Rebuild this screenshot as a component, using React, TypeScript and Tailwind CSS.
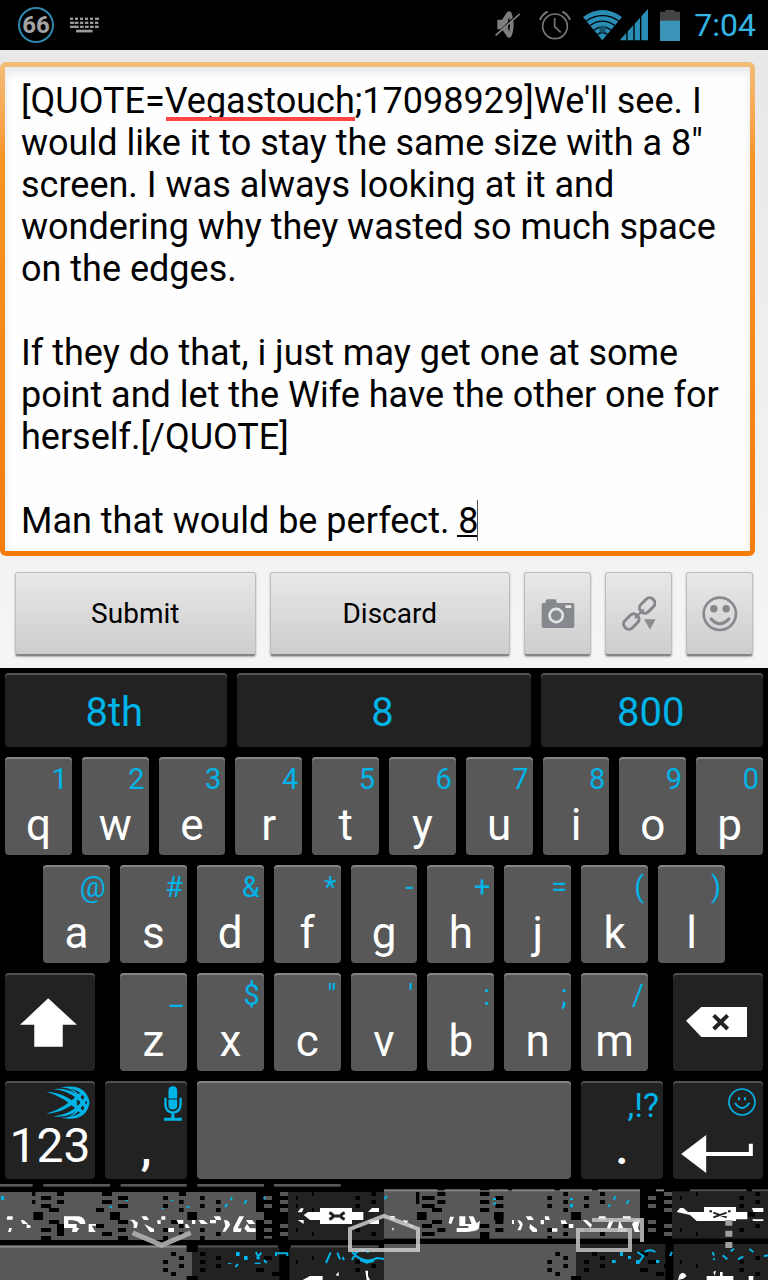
import type { ReactNode } from "react";

const DRAFT = `[QUOTE=Vegastouch;17098929]We'll see. I would like it to stay the same size with a 8" screen. I was always looking at it and wondering why they wasted so much space on the edges.

If they do that, i just may get one at some point and let the Wife have the other one for herself.[/QUOTE]

Man that would be perfect. 8`;

const ROW_1 = [["q", "1"], ["w", "2"], ["e", "3"], ["r", "4"], ["t", "5"], ["y", "6"], ["u", "7"], ["i", "8"], ["o", "9"], ["p", "0"]];
const ROW_2 = [["a", "@"], ["s", "#"], ["d", "&"], ["f", "*"], ["g", "-"], ["h", "+"], ["j", "="], ["k", "("], ["l", ")"]];
const ROW_3 = [["z", "_"], ["x", "$"], ["c", "\""], ["v", "'"], ["b", ":"], ["n", ";"], ["m", "/"]];

type Box = [x: number, y: number, w: number, h: number];

export default function App() {
  return (
    <div className="min-h-screen bg-black font-['Roboto',sans-serif]">
      <StatusBar />
      <Composer />
      <Keyboard />
      <NavBar />
    </div>
  );
}

function StatusBar() {
  return (
    <header className="flex h-[50px] items-center bg-black pl-[18px] pr-3">
      <span className="flex size-9 items-center justify-center rounded-full border-2 border-[#2d86ab] text-2xl font-bold leading-8 text-[#a3a3a3]">
        66
      </span>
      <svg viewBox="209 53 86 46" className="ml-4 h-4 w-[29px]" fill="#9a9a9a" aria-hidden="true">
        {[0, 1, 2, 3, 4, 5].map((i) => (
          <g key={i}>
            <rect x={209 + i * 14.8} y="54" width={i === 5 ? 12 : 9} height="7" />
            <rect x={209 + i * 14.8} y="66" width={i === 0 ? 13 : 10} height="7" />
            <rect x={209 + i * 14.8} y="78" width={i === 0 ? 17 : 11} height="7" />
          </g>
        ))}
        <rect x="227" y="90" width="49" height="8" />
      </svg>

      <div className="ml-auto flex items-center">
        <svg viewBox="45 33 75 90" className="h-[30px] w-[25px]" aria-hidden="true">
          <path d="M52 62 H66 L82 38 Q88 34 94 40 Q101 57 101 76 Q101 98 94 112 Q88 120 82 114 L66 91 H52 Z" fill="#7d7d7d" />
          <path d="M87 54 Q93 76 87 99 Q80 76 87 54Z" fill="#000" />
          <path d="M43 113 L116 42" stroke="#000" strokeWidth="5" />
          <path d="M47 109 L119 45" stroke="#858585" strokeWidth="5" />
        </svg>
        <svg viewBox="177 30 96 90" className="ml-[19px] h-[30px] w-8" fill="none" stroke="#777" strokeWidth="5" aria-hidden="true">
          <circle cx="225" cy="79" r="37" />
          <path d="M224 54 V80 L242 97" />
          <path d="M180 60 Q186 43 203 35 M270 60 Q264 43 247 35" strokeWidth="6" />
        </svg>
        <svg viewBox="309 27 195 96" className="ml-3 h-8 w-[65px]" fill="#2a8db5" aria-hidden="true">
          <path d="M309 51 Q367 9 426 51 L367 121 Z" />
          <g fill="none" stroke="#000" strokeWidth="4">
            <path d="M318 63 Q367 31 417 63" />
            <path d="M331 76 Q367 51 404 76" />
            <path d="M342 90 Q367 71 393 90" />
            <path d="M353 103 Q367 92 382 103" />
          </g>
          <path d="M355 78 H380 L374 98 H361 Z" fill="#17566f" />
          <path d="M419 121 L504 27 V121 Z" />
          <path d="M441 90 V123 M462 60 V123 M482 40 V123" stroke="#000" strokeWidth="4" />
        </svg>
        <svg viewBox="540 27 60 93" className="ml-3 h-[31px] w-5" aria-hidden="true">
          <path d="M540 32 H556 V27 H584 V32 H600 V60 H540Z" fill="#444" />
          <rect x="540" y="59" width="60" height="61" fill="#3b95b9" />
        </svg>
        <time className="ml-[14px] text-[32px] leading-9 text-[#33b5e5]">7:04</time>
      </div>
    </header>
  );
}

function Composer() {
  return (
    <main className="bg-gradient-to-b from-[#e8e8e8] to-[#f5f5f5] pb-3 pt-3">
      <div className="relative mr-[13px] rounded-md bg-gradient-to-b from-[#f1bd78] via-[#fb9422] via-20% to-[#f57c0b] p-[5px]">
        <textarea
          aria-label="Message"
          rows={11}
          defaultValue={DRAFT}
          spellCheck={false}
          className="block w-full resize-none overflow-hidden bg-[#fefefe] pb-[9px] pl-4 pr-2 pt-[13px] text-4xl leading-[42px] text-black shadow-[inset_0_5px_8px_#e6e6e6] outline-none"
        />
        {/* spelling mark, composing underline, caret */}
        <span className="absolute left-[166px] top-[55px] h-1 w-[189px] bg-[#ff4444]" />
        <span className="absolute left-[457px] top-[473px] h-0.5 w-5 bg-black" />
        <span className="absolute left-[477px] top-[438px] h-[41px] w-px bg-[#555]" />
      </div>

      <div className="mt-4 flex gap-[14px] px-[15px]">
        <ActionButton className="flex-1">Submit</ActionButton>
        <ActionButton className="flex-1">Discard</ActionButton>
        <ActionButton className="w-[67px]" label="Take photo">
          <svg viewBox="119 176 101 91" className="h-[30px] w-[34px]" fill="#85888c">
            <path d="M120 192 Q120 188 126 188 H132 V182 Q132 177 138 177 H159 Q165 177 165 183 V188 H213 Q219 188 219 194 V258 Q219 264 213 264 H126 Q120 264 120 258Z" />
            <rect x="192" y="195" width="18" height="8" rx="2" fill="#e8e8e8" />
            <circle cx="164" cy="226" r="20" fill="none" stroke="#e4e4e4" strokeWidth="8" />
          </svg>
        </ActionButton>
        <ActionButton className="w-[67px]" label="Insert link">
          <svg viewBox="361 168 102 104" className="h-[35px] w-[34px]" fill="none" stroke="#84878b" strokeWidth="9">
            <rect x="411" y="181" width="51" height="31" rx="14" transform="rotate(-45 436 196)" />
            <rect x="364" y="229" width="51" height="31" rx="14" transform="rotate(-45 389 245)" />
            <path d="M400 234 L426 208" strokeWidth="7" />
            <path d="M427 237 H462 L445 268Z" fill="#8c8c8c" stroke="none" />
          </svg>
        </ActionButton>
        <ActionButton className="w-[67px]" label="Insert smiley">
          <svg viewBox="602 167 107 107" className="size-9" fill="none" stroke="#85888c" strokeWidth="8">
            <circle cx="655" cy="220" r="48" />
            <path d="M629 235 Q655 264 682 235" strokeWidth="9" strokeLinecap="round" />
            <circle cx="637" cy="205" r="11" fill="#85888c" stroke="none" />
            <circle cx="674" cy="205" r="11" fill="#85888c" stroke="none" />
          </svg>
        </ActionButton>
      </div>
    </main>
  );
}

function ActionButton({ className, label, children }: { className: string; label?: string; children: ReactNode }) {
  return (
    <button
      aria-label={label}
      className={`flex h-[84px] items-center justify-center rounded-[3px] border border-b-2 border-[#bdbdbd] border-b-[#858585] bg-gradient-to-b from-[#e8e8e8] to-[#cdcdcd] text-[28px] text-black shadow-[0_1px_2px_#aaa] ${className}`}
    >
      {children}
    </button>
  );
}

function Keyboard() {
  return (
    <section aria-label="Keyboard" className="flex flex-col gap-2.5 bg-black px-[5px] pt-[5px]">
      <div className="flex gap-2.5">
        <Suggestion className="flex-[3]">8th</Suggestion>
        <Suggestion className="flex-[4]">8</Suggestion>
        <Suggestion className="flex-[3]">800</Suggestion>
      </div>
      <div className="flex gap-2.5">
        {ROW_1.map(([k, h]) => <LetterKey key={k} letter={k} hint={h} />)}
      </div>
      <div className="flex gap-2.5 px-[38px]">
        {ROW_2.map(([k, h]) => <LetterKey key={k} letter={k} hint={h} />)}
      </div>
      <div className="flex gap-[25px]">
        <DarkKey className="w-[90px] items-center justify-center pr-[3px]" label="Shift">
          <svg viewBox="61 97 172 148" className="h-[49px] w-[57px]" fill="#fff">
            <path d="M146 98 L233 178 H190 V244 H104 V178 H61Z" />
          </svg>
        </DarkKey>
        <div className="flex flex-1 gap-2.5">
          {ROW_3.map(([k, h]) => <LetterKey key={k} letter={k} hint={h} />)}
        </div>
        <DarkKey className="w-[90px] items-center justify-center pr-[3px]" label="Delete">
          <svg viewBox="380 126 183 90" className="h-[30px] w-[61px]">
            <path d="M380 167 L426 126 H563 V216 H426Z" fill="#fff" />
            <path d="M463 151 L505 192 M505 151 L463 192" stroke="#222" strokeWidth="12" />
          </svg>
        </DarkKey>
      </div>
      <div className="flex gap-2.5">
        <DarkKey className="w-[90px] items-end" label="Numbers">
          <SwiftLogo />
          <span className="w-full text-center text-[48px] leading-[54px]">123</span>
        </DarkKey>
        <DarkKey className="w-[82px] items-end" label="Comma, voice input">
          <svg viewBox="494 362 53 104" className="mr-[5px] mt-[5px] h-[35px] w-[18px]" fill="none" stroke="#00b4e8" strokeWidth="7">
            <path d="M507 399 V376 Q507 363 520 363 Q533 363 533 376 V399Z M507 402 H533 V419 Q533 432 520 432 Q507 432 507 419Z" fill="#00b4e8" stroke="none" />
            <path d="M498 397 V415 Q498 441 520 441 Q543 441 543 415 V397" />
            <path d="M520 441 V460 M494 461 H547" strokeWidth="9" />
          </svg>
          <span className="w-full text-center text-[48px] font-medium leading-[54px]">,</span>
        </DarkKey>
        <button aria-label="Space" className="h-[98px] flex-1 rounded bg-[#585858] shadow-[inset_0_2px_0_#858585]" />
        <DarkKey className="w-[82px] items-end" label="Period">
          <span className="mr-1 mt-1 h-9 text-[34px] leading-10 text-[#00b4e8]">,!?</span>
          <span className="w-full text-center text-[48px] font-medium leading-[54px]">.</span>
        </DarkKey>
        <DarkKey className="w-[90px] items-end" label="Enter">
          <svg viewBox="504 369 84 84" className="mr-[7px] mt-[7px] size-7" fill="none" stroke="#00b4e8" strokeWidth="5">
            <circle cx="546" cy="411" r="39" />
            <path d="M525 414 Q546 444 568 414 M537 397 V406 M555 397 V406" strokeWidth="6" />
          </svg>
          <svg viewBox="365 509 215 114" className="mr-2.5 mt-[19px] h-[38px] w-[72px]" fill="#fff">
            <path d="M365 566 L440 509 V560 H568 V535 H580 V572 H440 V623Z" />
          </svg>
        </DarkKey>
      </div>
    </section>
  );
}

function SwiftLogo() {
  const streaks = (
    <>
      <path d="M183 366 Q258 350 270 411 L262 411 Q248 366 183 366Z" />
      <path d="M160 370 Q230 362 264 424 L255 428 Q224 376 160 370Z" />
      <path d="M140 378 Q204 380 250 436 L241 441 Q196 394 140 378Z" />
      <path d="M196 364 Q240 374 250 411 L243 411 Q234 378 196 364Z" />
    </>
  );
  return (
    <svg viewBox="139 361 132 99" className="mr-[5px] mt-[5px] h-[33px] w-11" fill="#00b4e8">
      {streaks}
      <g transform="translate(0 822) scale(1 -1)">{streaks}</g>
      <path d="M206 411 L222 399 L234 411 L222 423Z" />
    </svg>
  );
}

function Suggestion({ className, children }: { className: string; children: ReactNode }) {
  return (
    <button className={`h-[74px] rounded bg-[#222] pr-[3px] pt-1.5 text-[40px] leading-[48px] text-[#00b4e8] shadow-[inset_0_2px_0_#555] ${className}`}>
      {children}
    </button>
  );
}

function LetterKey({ letter, hint }: { letter: string; hint: string }) {
  return (
    <button className="flex h-[98px] min-w-0 flex-1 flex-col rounded bg-[#585858] pt-1 shadow-[inset_0_2px_0_#858585]">
      <span className="w-full pr-1 text-right text-[29px] leading-9 text-[#00b4e8]">{hint}</span>
      <span className="w-full text-center text-[44px] leading-[56px] text-white">{letter}</span>
    </button>
  );
}

function DarkKey({ className, label, children }: { className: string; label: string; children: ReactNode }) {
  return (
    <button aria-label={label} className={`flex h-[98px] shrink-0 flex-col rounded bg-[#222] text-white shadow-[inset_0_2px_0_#505050] ${className}`}>
      {children}
    </button>
  );
}

// Leftovers of the key rows under the navigation bar, three units to a pixel
const GREY: Box[] = [
  [0, 12, 98, 8], [130, 12, 200, 8], [362, 12, 198, 8], [592, 12, 200, 8], [822, 12, 200, 8],
  [0, 36, 768, 144], [1152, 30, 768, 146], [0, 200, 576, 100], [1152, 192, 576, 108],
  [792, 48, 24, 12], [840, 36, 24, 12], [792, 72, 24, 12], [840, 60, 24, 12], [768, 96, 24, 24], [840, 84, 24, 12],
  [792, 120, 24, 12], [840, 132, 24, 12], [792, 144, 24, 12], [840, 156, 24, 12], [792, 168, 24, 8],
  [1944, 48, 24, 12], [1992, 36, 24, 12], [1944, 72, 24, 12], [1992, 60, 24, 12], [1992, 84, 24, 12],
  [1944, 120, 24, 12], [1992, 132, 24, 12], [1944, 144, 24, 12], [1992, 156, 24, 12],
];
const DARK: Box[] = [[864, 36, 288, 144], [2016, 34, 288, 142], [576, 204, 262, 96], [868, 204, 284, 96], [1728, 192, 268, 108], [2020, 192, 284, 108]];
const EDGE: Box[] = [
  [0, 196, 560, 7], [1152, 28, 160, 6], [1334, 28, 106, 6], [1468, 28, 56, 6], [1536, 28, 128, 6],
  [1680, 28, 96, 6], [1794, 28, 126, 6], [1968, 28, 24, 6],
];
const DIM_EDGE: Box[] = [[592, 196, 242, 7], [872, 196, 264, 7], [2070, 28, 170, 6], [2256, 28, 48, 6]];
const HOLES: Box[] = [
  [96, 36, 10, 12], [123, 48, 30, 12], [171, 36, 21, 12], [96, 60, 10, 12], [171, 60, 21, 12], [123, 72, 30, 12], [147, 84, 30, 12],
  [100, 96, 29, 24], [147, 120, 30, 12], [171, 132, 21, 24], [123, 144, 30, 12], [171, 156, 21, 12], [123, 168, 30, 12],
  [306, 36, 30, 12], [354, 48, 30, 12], [306, 60, 30, 12], [354, 72, 30, 12], [288, 84, 24, 12], [330, 96, 30, 24],
  [354, 120, 30, 12], [288, 132, 24, 12], [354, 144, 24, 12], [306, 156, 30, 12], [354, 168, 30, 12],
  [489, 48, 15, 12], [537, 36, 21, 12], [537, 60, 14, 12], [489, 72, 15, 12], [537, 84, 14, 12], [562, 96, 29, 24],
  [513, 120, 20, 12], [537, 132, 14, 12], [489, 144, 15, 12], [537, 156, 14, 12], [489, 168, 15, 12],
  [600, 48, 14, 12], [648, 60, 14, 12], [600, 72, 14, 12], [648, 84, 14, 12], [600, 144, 14, 12], [648, 156, 14, 12], [600, 168, 14, 12],
  [513, 216, 15, 12], [537, 228, 15, 12], [489, 240, 15, 12], [537, 252, 15, 12], [489, 264, 15, 12], [513, 276, 15, 12],
  [560, 190, 33, 26], [560, 288, 33, 12],
  [600, 216, 16, 12], [648, 228, 15, 12], [600, 240, 16, 12], [648, 252, 15, 12], [600, 264, 16, 12],
  [768, 264, 24, 12], [792, 228, 24, 12], [840, 240, 24, 12], [816, 276, 26, 12],
  [888, 48, 5, 12], [936, 36, 5, 12], [888, 72, 5, 12], [936, 84, 5, 12], [888, 144, 5, 12], [936, 156, 5, 12],
  [1066, 48, 14, 12], [1114, 36, 14, 12], [1066, 72, 14, 12], [1114, 60, 14, 12], [1066, 144, 14, 12], [1114, 156, 14, 12],
  [888, 240, 5, 12], [936, 228, 5, 12], [1066, 240, 14, 12], [1114, 252, 14, 12], [1066, 264, 14, 12],
  [1248, 36, 10, 36], [1266, 48, 38, 12], [1312, 36, 24, 12], [1266, 72, 38, 12], [1312, 60, 24, 12], [1251, 96, 29, 24],
  [1296, 84, 30, 12], [1296, 120, 30, 12], [1266, 132, 30, 12], [1312, 144, 24, 12], [1266, 156, 38, 12],
  [1440, 36, 28, 12], [1486, 48, 24, 12], [1440, 60, 28, 12], [1482, 96, 29, 24], [1440, 84, 28, 12], [1440, 132, 28, 12],
  [1486, 72, 24, 12], [1486, 120, 24, 12], [1440, 156, 28, 24], [1486, 144, 24, 12],
  [1642, 48, 14, 12], [1690, 36, 14, 12], [1642, 72, 14, 12], [1690, 60, 14, 12], [1690, 84, 14, 12], [1713, 96, 30, 24],
  [1642, 144, 14, 12], [1690, 132, 14, 12], [1642, 168, 14, 8], [1690, 156, 14, 12],
  [1752, 48, 15, 12], [1800, 36, 15, 12], [1752, 72, 15, 12], [1800, 60, 15, 12], [1752, 144, 15, 12], [1800, 156, 15, 12],
  [1642, 240, 14, 12], [1666, 216, 14, 12], [1690, 228, 14, 12], [1642, 264, 14, 12], [1666, 276, 14, 12], [1690, 252, 14, 12],
  [1713, 288, 30, 12], [1752, 240, 15, 12], [1776, 216, 15, 12], [1800, 228, 15, 12], [1752, 264, 15, 12], [1800, 252, 15, 12],
  [1920, 216, 24, 12], [1944, 240, 24, 12], [1992, 252, 24, 12], [1968, 276, 24, 12], [1920, 264, 24, 12],
  [2040, 48, 5, 12], [2088, 36, 5, 12], [2040, 144, 5, 12], [2088, 156, 5, 12], [2218, 48, 14, 12], [2266, 36, 14, 12],
  [2218, 72, 14, 12], [2266, 60, 14, 12], [2242, 96, 24, 14], [2218, 144, 14, 12], [2266, 132, 14, 12],
  [2218, 240, 14, 12], [2266, 228, 14, 12], [2218, 264, 14, 12], [2266, 276, 14, 12], [2040, 240, 5, 12], [2088, 252, 5, 12],
];
const BLUE: Box[] = [
  [3, 48, 9, 12], [327, 78, 9, 5], [376, 60, 8, 3], [511, 60, 8, 3], [485, 84, 6, 3], [560, 78, 9, 5],
  [708, 216, 11, 12], [732, 228, 11, 12], [684, 249, 10, 3], [764, 248, 18, 4],
  [1479, 54, 9, 6], [1479, 68, 9, 6], [1710, 54, 9, 6], [1710, 72, 9, 10],
  [1836, 240, 11, 9], [1860, 216, 9, 12], [1884, 228, 9, 9], [1908, 240, 10, 12], [1968, 240, 10, 9],
];

function Boxes({ boxes, fill }: { boxes: Box[]; fill: string }) {
  return (
    <g fill={fill}>
      {boxes.map(([x, y, w, h]) => <rect key={`${x}-${y}`} x={x} y={y} width={w} height={h} />)}
    </g>
  );
}

function NavBar() {
  return (
    <nav className="relative h-[101px] overflow-hidden bg-black">
      <svg viewBox="0 -3 2304 303" preserveAspectRatio="none" className="absolute inset-0 size-full" aria-hidden="true">
        <Boxes boxes={GREY} fill="#585858" />
        <Boxes boxes={DARK} fill="#222" />
        <Boxes boxes={EDGE} fill="#858585" />
        <Boxes boxes={DIM_EDGE} fill="#505050" />
        <Boxes boxes={HOLES} fill="#000" />
        <Boxes boxes={BLUE} fill="#00b4e8" />
        <g fill="#fff">
          <path d="M22 109 H38 V119 H20Z M28 144 L36 144 32 156 H24Z M62 120 L72 121 84 132 H68Z M80 132 L93 138 90 144 H80Z" />
          <path d="M192 109 H236 Q256 112 256 132 H240 Q236 120 205 120 V132 H230 V144 H192Z M218 144 H238 L230 156 H216Z M266 132 H288 V137 H275 L287 156 H266Z" />
          <path d="M385 120 L395 122 401 132 V144 H410 L414 128 401 119Z M424 109 H440 L447 120 H432Z M433 132 L462 147 V156 H450Z M484 109 L496 109 V119 H484Z M471 121 L482 121 V132 H473Z M505 144 H522 V156 H505Z M530 120 H550 V131 H535Z M556 132 H562 L570 144 H556Z M576 120 H586 V132 H576Z" />
          <path d="M596 120 H610 L624 132 H603Z M630 120 H648 V130 H630Z M641 109 H660 L664 120 H648Z M672 120 Q690 120 690 136 L676 155 H667 L676 138Z M718 109 H732 L713 145 725 145 722 156 H700 V144Z M738 120 H756 L766 132 H746Z M741 132 L750 145 767 145 V156 H742 L733 145Z" />
          <path d="M893 97 L902 85 911 85 906 97Z M911 105 L924 96 H960 V84 H1056 V96 H1090 V120 H1056 V132 H960 V120 H930Z M893 120 H911 V132Z M1104 96 L1116 84 H1137 V96Z M1104 120 H1137 V132 H1110Z" />
          <path d="M1346 130 L1350 110 H1362 L1354 132Z M1378 109 H1396 V132 H1415 L1406 109 H1420 L1430 130 1440 122 1436 146 Q1428 157 1370 156 V144 H1405 V138 H1378Z M1176 144 L1182 144 1179 154Z M1170 108 H1184 V120 H1170Z M1208 120 L1224 122 1220 132Z M1224 132 L1240 136 1237 144Z" />
          <path d="M1536 120 L1542 120 V132 H1536Z M1552 120 Q1568 121 1568 135 L1562 151 H1552 L1560 136Z M1577 109 H1594 L1602 120 H1584Z M1590 132 L1611 148 V156 H1598 L1588 144Z M1634 109 H1646 L1650 120 H1636Z M1622 120 H1632 V133H1622Z M1656 145 H1672 V155H1656Z M1682 121 H1696 L1702 132 H1684Z M1707 132 H1720 V144H1707Z M1748 120 H1760 L1776 134 1772 144 Z M1797 109 H1816 L1820 120 H1794Z M1829 120 H1842 L1830 146 H1820Z M1858 120 L1870 145 H1880 V156 H1852 L1854 146Z M1868 109 H1892 V119 H1870Z M1896 132 L1906 120 1920 120 1914 145 1920 156 H1904Z" />
          <path d="M2030 96 L2040 84 2050 84 2064 96 H2112 V81 H2208 V96 H2242 V118 H2208 V123 H2090 L2070 105Z M2256 84 H2290 V96 H2260Z M2256 118 H2290 V123 H2260Z" />
          <path d="M908 300 L930 288 H968 V300Z M1007 286 L1016 275 V288Z M1096 272 H1104 V288 L1110 300 H1100Z M2038 286 Q2048 270 2060 288 L2050 296 2034 300Z M2120 288 H2200 V300H2120Z M2140 275 L2148 272 2144 288Z M2160 276 H2168 V288H2160Z M2246 288 H2260 V300H2246Z" />
        </g>
        <path d="M988 98 Q1011 108 988 118 M1034 98 Q1011 108 1034 118 M998 108 H1024" fill="none" stroke="#222" strokeWidth="9" />
        <path d="M2140 98 L2180 112 M2180 98 L2140 112 M2128 94 H2136 M2184 94 H2192" stroke="#222" strokeWidth="6" />
        <g fill="none" stroke="#00b4e8" strokeWidth="6">
          <path d="M675 82 L681 72 M693 60 L695 51 M733 71 L740 60 M706 261 L714 252 M768 216 L778 238 M793 50 V58 M1154 58 L1160 48 M1826 81 L1830 73 M1842 60 L1846 48 M1880 71 L1886 60" />
          <path d="M770 236 L784 218 M800 249 L792 240 M828 228 V220 H862 V228 M978 249 L992 217 M1012 218 L1020 238 M1028 231 L1032 240 M1056 240 L1068 218 Q1090 202 1106 218 M1056 216 Q1090 255 1132 234 L1152 237 M1080 240 L1100 248 1122 242" />
          <path d="M1912 216 L1930 228 1914 251 M1934 216 Q1950 206 1966 216 M2010 228 L2016 216 M2138 216 L2142 227 M2140 235 L2144 240 M2168 226 L2182 238 M2192 214 L2202 206 M2214 238 L2230 229 M2248 207 L2260 216 M2292 229 L2304 226" />
        </g>
      </svg>

      <div className="relative flex pl-[131px] pr-[34px] pt-8">
        <NavButton label="Back" className="w-[62px]">
          <svg viewBox="393 93 186 126" className="h-[42px] w-[62px]">
            <path d="M398 158 L485 196 L572 158" fill="none" stroke="#b0b0b0" strokeOpacity="0.9" strokeWidth="15" />
          </svg>
        </NavButton>
        <NavButton label="Home" className="ml-[154px] w-[74px]">
          <svg viewBox="291 93 222 126" className="h-[42px] w-[74px]">
            <path d="M300 147 L402 108 L504 147 V210 H300Z" fill="none" stroke="#ccc" strokeOpacity="0.85" strokeWidth="12" />
          </svg>
        </NavButton>
        <NavButton label="Recent apps" className="ml-[154px] w-[70px]">
          <svg viewBox="201 93 210 126" className="h-[42px] w-[70px]" fill="none" stroke="#c4c4c4" strokeOpacity="0.85" strokeWidth="12">
            <rect x="210" y="150" width="156" height="60" />
            <path d="M252 120 H402 V186" />
          </svg>
        </NavButton>
        <NavButton label="Menu" className="ml-auto w-2.5">
          <svg viewBox="648 93 30 126" className="h-[42px] w-2.5" fill="#a0a0a0">
            <path d="M652 120 H673 V137 H652Z M652 152 H673 V170 H652Z M652 186 H673 V204 H652Z" />
          </svg>
        </NavButton>
      </div>
    </nav>
  );
}

function NavButton({ label, className, children }: { label: string; className: string; children: ReactNode }) {
  return <button aria-label={label} className={`block ${className}`}>{children}</button>;
}
